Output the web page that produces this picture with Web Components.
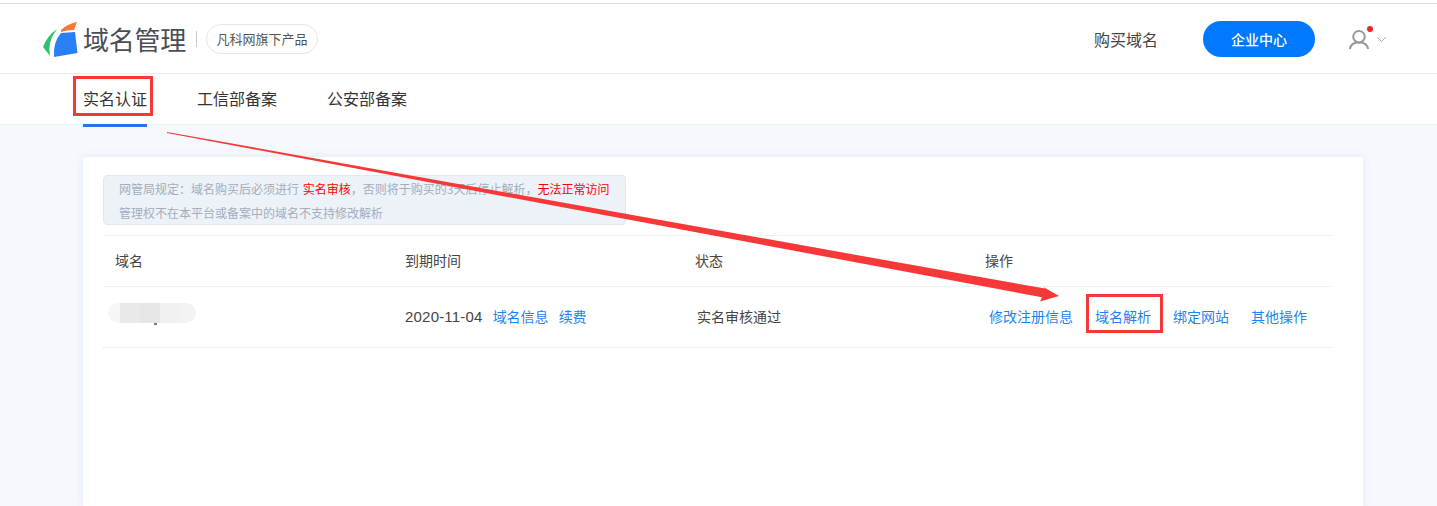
<!DOCTYPE html>
<html lang="zh">
<head>
<meta charset="utf-8">
<title>域名管理</title>
<style>
  html, body { margin: 0; height: 506px; overflow: hidden; }
  body { font-family: "Noto Sans CJK SC", "Liberation Sans", sans-serif; color: #333; background: #f5f8fd; }
</style>
</head>
<body>
<domain-page>
  <site-header></site-header>
  <site-tabs></site-tabs>
  <domain-card>
    <notice-box>
      网管局规定：域名购买后必须进行 <b>实名审核</b>，否则将于购买的3天后停止解析，<b>无法正常访问</b><br>
      管理权不在本平台或备案中的域名不支持修改解析
    </notice-box>
    <domain-table></domain-table>
  </domain-card>
  <note-layer></note-layer>
</domain-page>

<script>
class DomainPage extends HTMLElement {
  constructor() {
    super();
    this.attachShadow({ mode: 'open' });
  }

  connectedCallback() {
    this.shadowRoot.innerHTML = `
      <style>
        :host { display: flex; flex-direction: column; position: relative; height: 506px; overflow: hidden; }
      </style>
      <slot></slot>
    `;
  }
}

class SiteHeader extends HTMLElement {
  constructor() {
    super();
    this.attachShadow({ mode: 'open' });
  }

  connectedCallback() {
    this.shadowRoot.innerHTML = `
      <style>
        :host {
          display: flex; align-items: center; flex: none; box-sizing: border-box;
          height: 74px; margin: 0; padding: 4px 0 0 43px;
          background: #fff; border-bottom: 1px solid #ececec; position: relative;
        }
        :host::before { content: ''; position: absolute; left: 0; right: 0; top: 3px; height: 1px; background: #dcdcdc; }
        .logo { width: 35px; height: 35px; flex: none; margin: 2px 5px 0 0; }
        .title { font-size: 26px; line-height: 36px; color: #4a4d55; width: 104px; letter-spacing: -.25px; white-space: nowrap; }
        .sep { width: 1px; height: 16px; background: #c9c9c9; margin: 0 9px 0 9px; }
        .badge {
          box-sizing: border-box; height: 30px; width: 112px; border: 1px solid #e6e6e6; border-radius: 15px;
          font-size: 13px; line-height: 28px; color: #555; text-align: center; white-space: nowrap;
        }
        .right { margin-left: auto; display: flex; align-items: center; }
        .buy { font-size: 16px; color: #444; margin-right: 45px; white-space: nowrap; }
        .btn {
          width: 112px; height: 36px; border-radius: 18px; background: #0078ff; color: #fff;
          font-size: 14px; font-weight: 500; line-height: 36px; text-align: center; margin-right: 34px;
        }
        .user { width: 38px; height: 25px; margin-right: 50px; flex: none; }
      </style>
      <svg class="logo" viewBox="43 22 35 35">
        <path d="M57 29 Q47 36 43 47 L50 56 Q47 42 57 29Z" fill="#2fc26e"/>
        <path d="M61 30 Q67 24 77 22 L74 30 Q67 30 61 32Z" fill="#f5793a"/>
        <path d="M61 33 L75 32 L77.500 53 L54 57 Q53 42 61 33Z" fill="#2b7ff5"/>
      </svg>
      <span class="title">域名管理</span>
      <span class="sep"></span>
      <span class="badge">凡科网旗下产品</span>
      <div class="right">
        <span class="buy">购买域名</span>
        <span class="btn">企业中心</span>
        <svg class="user" viewBox="0 0 38 25" fill="none">
          <circle cx="10" cy="10.700" r="5.800" stroke="#999" stroke-width="2"/>
          <path d="M1 23 C1.500 18 5 16.500 10 16.500 S18.500 18 19 23" stroke="#999" stroke-width="2"/>
          <circle cx="21" cy="3" r="3" fill="#f5222d"/>
          <path d="M28 11 L32.500 15.500 L37 11" stroke="#aaa" stroke-width="1"/>
        </svg>
      </div>
    `;
  }
}

class SiteTabs extends HTMLElement {
  constructor() {
    super();
    this.attachShadow({ mode: 'open' });
  }

  connectedCallback() {
    this.shadowRoot.innerHTML = `
      <style>
        :host {
          display: flex; flex: none; gap: 50px; height: 50px; padding-left: 83px;
          background: #fff; border-bottom: 1px solid #eef1f6; box-sizing: content-box;
          font-size: 16px; color: #333;
        }
        span { display: block; height: 53px; box-sizing: border-box; line-height: 48px; white-space: nowrap; }
        .on { border-bottom: 3px solid #2a6ff0; }
      </style>
      <span class="on">实名认证</span>
      <span>工信部备案</span>
      <span>公安部备案</span>
    `;
  }
}

class DomainCard extends HTMLElement {
  constructor() {
    super();
    this.attachShadow({ mode: 'open' });
  }

  connectedCallback() {
    this.shadowRoot.innerHTML = `
      <style>
        :host {
          display: block; flex: 1; box-sizing: border-box; margin: 32px 74px 0 83px; padding: 18px 30px 0 20px;
          background: #fff; border-radius: 3px 3px 0 0; box-shadow: 0 0 8px rgba(60, 90, 150, .1);
        }
      </style>
      <slot></slot>
    `;
  }
}

class NoticeBox extends HTMLElement {
  constructor() {
    super();
    this.attachShadow({ mode: 'open' });
  }

  connectedCallback() {
    this.shadowRoot.innerHTML = `
      <style>
        :host {
          display: block; box-sizing: border-box; width: 523px; height: 50px; padding: 1px 0 0 15px;
          background: #edf1f8; border: 1px solid #e2e7f0; border-radius: 4px;
          font-size: 12px; line-height: 24px; color: #a3adbd; white-space: nowrap;
        }
        ::slotted(b) { font-weight: 400; color: #f00; }
        ::slotted(b:first-of-type) { margin-left: 1px; }
      </style>
      <slot></slot>
    `;
  }
}

class DomainTable extends HTMLElement {
  constructor() {
    super();
    this.attachShadow({ mode: 'open' });
  }

  connectedCallback() {
    this.shadowRoot.innerHTML = `
      <style>
        :host { display: block; margin-top: 10px; font-size: 14px; line-height: 20px; color: #444; }
        .row { display: grid; grid-template-columns: repeat(4, 290px); width: 1230px; }
        .head { height: 50px; border-top: 1px solid #eef1f6; border-bottom: 1px solid #eef1f6; }
        .body { height: 60px; border-bottom: 1px dotted #e6e6e6; }
        .cell { box-sizing: border-box; padding: 0 0 2px 12px; white-space: nowrap; display: flex; align-items: center; }
        a { color: #1a85f0; text-decoration: none; }
        .date { font-family: "Liberation Sans", sans-serif; font-size: 15px; letter-spacing: .2px; margin: 2px 10px 0 0; }
        .fee { margin-left: 10px; }
        .state { padding-left: 14px; }
        .ops { padding-left: 16px; gap: 22px; }
        .blur {
          position: relative; width: 88px; height: 20px; margin: 0 0 6px -7px; border-radius: 10px;
          background: linear-gradient(90deg, #f6f6f6 12px, #e9e9e9 12px, #e9e9e9 32px, #e6e6e6 32px, #e6e6e6 52px, #f1f1f1 52px, #f1f1f1 72px, #f3f3f3 72px);
        }
        .blur i { position: absolute; left: 46px; top: 20px; width: 3px; height: 2px; background: #777; }
      </style>
      <div class="row head">
        <div class="cell">域名</div>
        <div class="cell">到期时间</div>
        <div class="cell">状态</div>
        <div class="cell">操作</div>
      </div>
      <div class="row body">
        <div class="cell"><div class="blur"><i></i></div></div>
        <div class="cell"><span class="date">2020-11-04</span><a>域名信息</a><a class="fee">续费</a></div>
        <div class="cell state">实名审核通过</div>
        <div class="cell ops"><a>修改注册信息</a><a>域名解析</a><a>绑定网站</a><a>其他操作</a></div>
      </div>
    `;
  }
}

// 截图上的红色标注，盖在页面内容之上
class NoteLayer extends HTMLElement {
  constructor() {
    super();
    this.attachShadow({ mode: 'open' });
  }

  connectedCallback() {
    this.shadowRoot.innerHTML = `
      <style>
        :host { position: absolute; left: 0; top: 0; width: 1437px; height: 506px; pointer-events: none; }
        svg { display: block; }
      </style>
      <svg width="1437" height="506" fill="none">
        <rect x="74.500" y="77.500" width="77" height="37" stroke="#f73838" stroke-width="3"/>
        <rect x="1087.500" y="295.500" width="74" height="36" stroke="#f73838" stroke-width="3"/>
        <path d="M167 132 L1045 288.600 L1043 286.800 L1059 296 L1040 301.500 L1042 297.300 L167 133Z" fill="#f73838"/>
      </svg>
    `;
  }
}

customElements.define('domain-page', DomainPage);
customElements.define('site-header', SiteHeader);
customElements.define('site-tabs', SiteTabs);
customElements.define('domain-card', DomainCard);
customElements.define('notice-box', NoticeBox);
customElements.define('domain-table', DomainTable);
customElements.define('note-layer', NoteLayer);
</script>
</body>
</html>
